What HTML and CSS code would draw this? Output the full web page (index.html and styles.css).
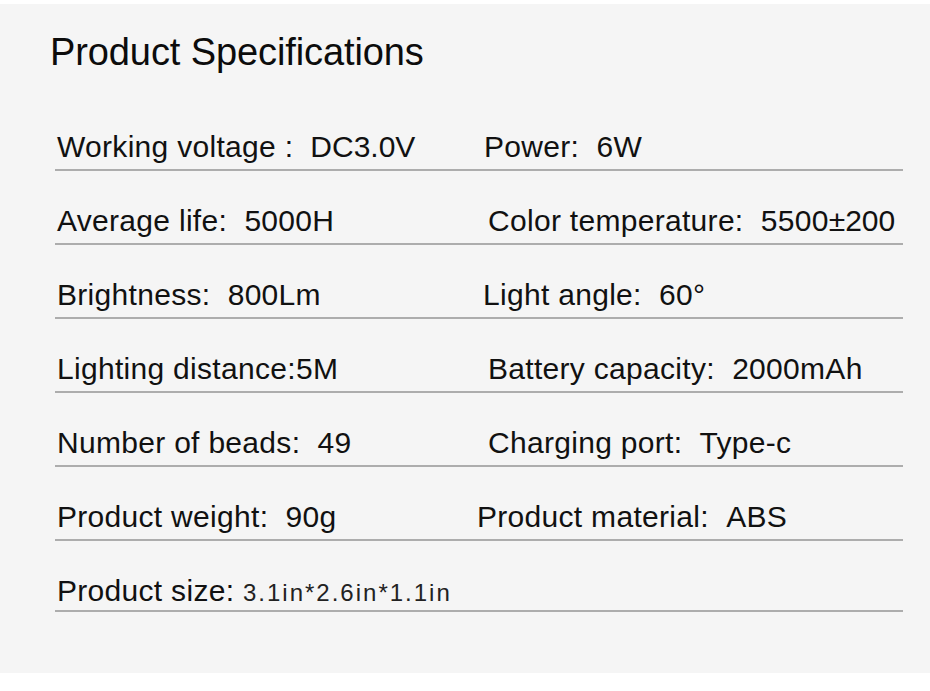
FILE: index.html
```html
<!DOCTYPE html>
<html lang="en">
<head>
<meta charset="utf-8">
<title>Product Specifications</title>
<link rel="stylesheet" href="styles.css">
</head>
<body>
<section class="sheet">
  <h1 class="title">Product Specifications</h1>
  <div class="specs">
    <div class="row">
      <div class="cell left">Working voltage : <span class="tight">&nbsp;DC3.0V</span></div>
      <div class="cell right r-a">Power: &nbsp;6W</div>
    </div>
    <div class="row">
      <div class="cell left">Average life: &nbsp;5000H</div>
      <div class="cell right r-b">Color temperature: &nbsp;5500<span class="pm">±200</span></div>
    </div>
    <div class="row">
      <div class="cell left">Brightness: &nbsp;800Lm</div>
      <div class="cell right r-c">Light angle: &nbsp;60°</div>
    </div>
    <div class="row">
      <div class="cell left">Lighting distance:5M</div>
      <div class="cell right r-b">Battery capacity: &nbsp;2000mAh</div>
    </div>
    <div class="row">
      <div class="cell left">Number of beads: &nbsp;49</div>
      <div class="cell right r-b">Charging port: &nbsp;Type-c</div>
    </div>
    <div class="row">
      <div class="cell left">Product weight: &nbsp;90g</div>
      <div class="cell right r-d">Product material: &nbsp;ABS</div>
    </div>
    <div class="row row-last">
      <div class="cell left">Product size: <span class="size">3.1in*2.6in*1.1in</span></div>
      <div class="cell right"></div>
    </div>
  </div>
</section>
</body>
</html>
```

FILE: styles.css
```css
html, body {
  margin: 0;
  padding: 0;
  background: #ffffff;
}

body {
  width: 930px;
  height: 691px;
  overflow: hidden;
  font-family: "Liberation Sans", Arial, sans-serif;
  color: #111111;
}

.sheet {
  margin-top: 4px;
  height: 669px;
  box-sizing: border-box;
  background: #f5f5f5;
  padding: 26px 27px 0 50px;
}

.title {
  margin: 0;
  font-family: "Liberation Sans", Arial, sans-serif;
  font-weight: normal;
  font-size: 38px;
  line-height: 44px;
  letter-spacing: -0.1px;
  color: #0c0c0c;
}

.specs {
  margin: 23px 0 0 5px;
  width: 848px;
}

.row {
  display: grid;
  grid-template-columns: 427px 1fr;
  box-sizing: border-box;
  height: 74px;
  padding-top: 35px;
  border-bottom: 2px solid #adadad;
}

.row-last {
  height: 71px;
}

.cell {
  font-size: 30px;
  line-height: 30px;
  letter-spacing: 0.3px;
  white-space: nowrap;
}

.tight {
  letter-spacing: 0;
}

.left {
  padding-left: 2px;
}

.r-a { padding-left: 2px; }
.r-b { padding-left: 6px; }
.r-c { padding-left: 1px; }
.r-d { margin-left: -5px; }

.pm {
  letter-spacing: 0;
}

.size {
  font-size: 24px;
  letter-spacing: 2px;
  color: #222222;
}
```
